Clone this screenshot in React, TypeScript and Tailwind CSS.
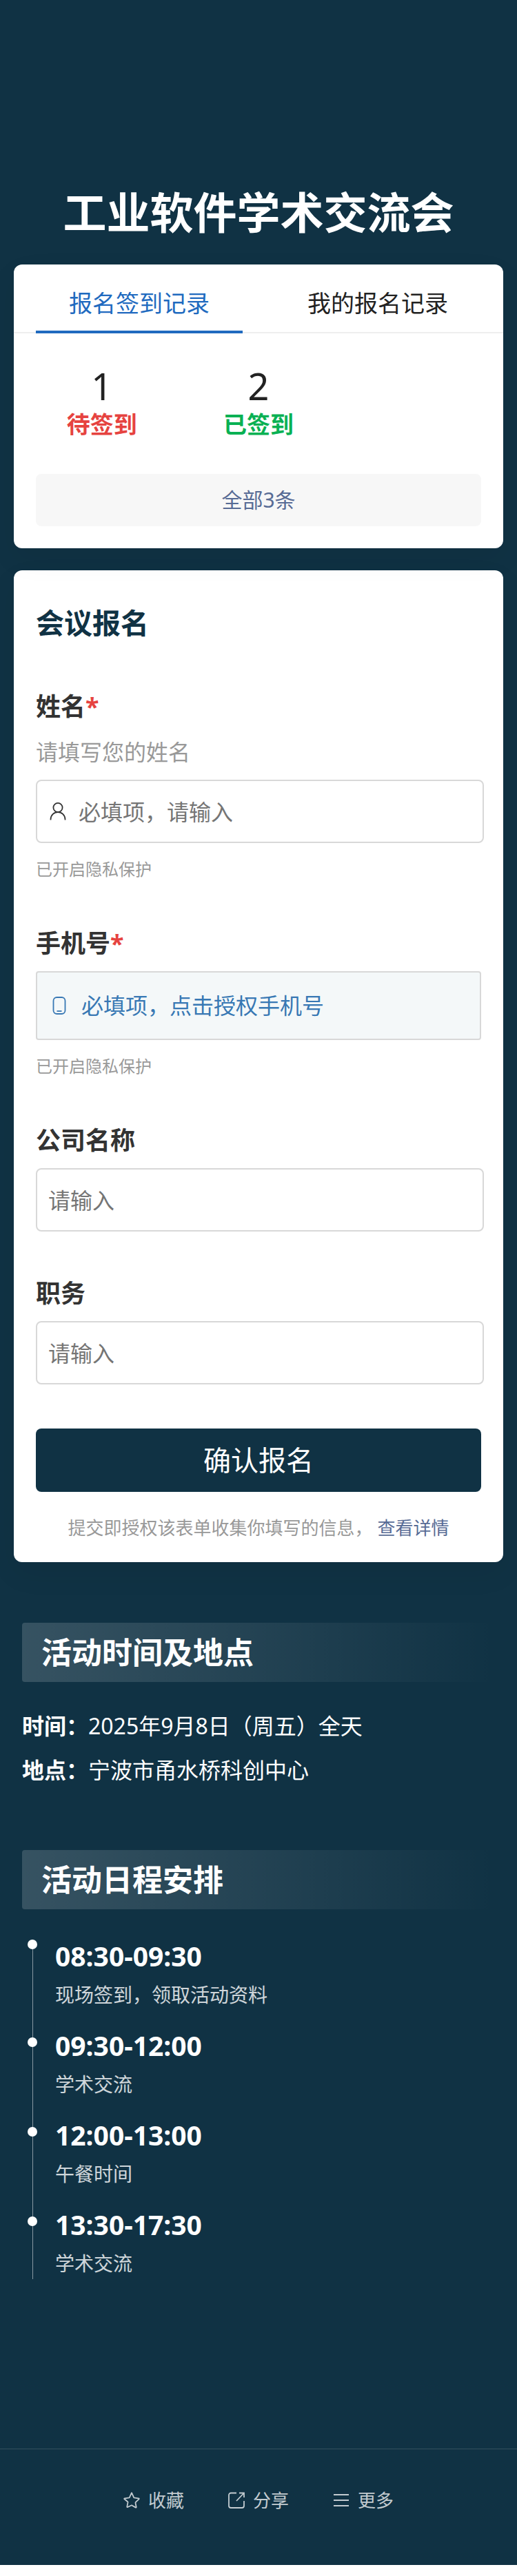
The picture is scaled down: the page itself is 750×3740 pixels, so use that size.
import { useState } from "react";
import type { ReactNode } from "react";

const tabs = ["报名签到记录", "我的报名记录"];

const stats = [
  { count: 1, label: "待签到", color: "text-[#e64340]" },
  { count: 2, label: "已签到", color: "text-[#09b153]" },
];

const schedule = [
  { time: "08:30-09:30", desc: "现场签到，领取活动资料" },
  { time: "09:30-12:00", desc: "学术交流" },
  { time: "12:00-13:00", desc: "午餐时间" },
  { time: "13:30-17:30", desc: "学术交流" },
];

const actions = [
  {
    label: "收藏",
    icon: (
      <svg viewBox="0 0 24 24" fill="none" stroke="currentColor" strokeWidth={1.8} strokeLinejoin="round" className="w-6 h-6" aria-hidden="true">
        <path d="M12 1.2l3.1 6.6q.2.500.800.600l6.300.900q1 .200.300 1l-4.700 4.500q-.400.400-.300 1l1.200 6.200q.100 1-.800.600L12 19.300l-5.900 2.700q-.900.400-.800-.600l1.200-6.200q.100-.600-.300-1L1.500 10.300q-.700-.800.300-1l6.300-.9q.600-.100.800-.600z" />
      </svg>
    ),
  },
  {
    label: "分享",
    icon: (
      <svg viewBox="0 0 24 24" fill="none" stroke="currentColor" strokeWidth={1.8} className="w-6 h-6" aria-hidden="true">
        <path d="M12 1.500H4A3 3 0 001 4.500V20a3 3 0 003 3h16a3 3 0 003-3v-7M16 1.500h7V8M23 1.500L12 13" />
      </svg>
    ),
  },
  {
    label: "更多",
    icon: (
      <svg viewBox="0 0 24 24" fill="none" stroke="currentColor" strokeWidth={2} className="w-6 h-6" aria-hidden="true">
        <path d="M1 4h22M1 12h22M1 20h22" />
      </svg>
    ),
  },
];

function Field({ id, label, required, note, children }: {
  id: string;
  label: string;
  required?: boolean;
  note?: string;
  children: ReactNode;
}) {
  return (
    <div>
      <label htmlFor={id} className="block text-[36px] leading-[48px] font-bold text-[#333]">
        {label}
        {required && <span className="text-[#e64340]">*</span>}
      </label>
      {note && <p className="mt-[18px] text-[32px] leading-[48px] text-[#999]">{note}</p>}
      <div className="mt-4">{children}</div>
    </div>
  );
}

function PrivacyHint() {
  return <p className="mt-5 text-[24px] leading-[36px] text-[#999]">已开启隐私保护</p>;
}

function SectionTitle({ children }: { children: ReactNode }) {
  return (
    <h2 className="rounded bg-linear-to-r from-white/16 to-white/0 px-7 py-3 text-[44px] leading-[62px] font-bold">
      {children}
    </h2>
  );
}

export default function App() {
  const [tab, setTab] = useState(0);

  return (
    <div className="bg-white pb-4 font-['Noto_Sans','Noto_Sans_CJK_SC',sans-serif]">
      <div className="bg-[#103244] text-white">
        <main className="px-5 pt-[264px]">
          <h1 className="text-center text-[63px] leading-[88px] font-bold">工业软件学术交流会</h1>

          {/* Records */}
          <section className="relative z-10 mt-8 rounded-xl bg-white pb-8 text-[#222] shadow-[0_16px_44px_rgba(0,0,0,0.06)]">
            <div className="flex justify-between gap-6 border-b-2 border-[#eee] px-8" role="tablist">
              {tabs.map((t, i) => (
                <button
                  key={t}
                  type="button"
                  role="tab"
                  aria-selected={tab === i}
                  onClick={() => setTab(i)}
                  className={`-mb-0.5 w-[300px] border-b-4 pt-8 pb-4 text-[34px] leading-[48px] ${
                    tab === i ? "border-[#206abf] text-[#206abf]" : "border-transparent"
                  }`}
                >
                  {t}
                </button>
              ))}
            </div>

            <div className="grid grid-cols-3 px-3.5 pt-11 text-center">
              {stats.map((s) => (
                <div key={s.label}>
                  <div className="text-[54px] leading-[64px]">{s.count}</div>
                  <div className={`text-[34px] leading-[48px] font-bold ${s.color}`}>{s.label}</div>
                </div>
              ))}
            </div>

            <div className="px-8 pt-12">
              <button type="button" className="w-full rounded-lg bg-[#f7f7f7] py-4 text-[30px] leading-[44px] text-[#576b95]">
                全部3条
              </button>
            </div>
          </section>

          {/* Sign-up form */}
          <form className="mt-8 rounded-xl bg-white px-8 pt-12 pb-8 text-[#333] shadow-[0_16px_44px_rgba(0,0,0,0.06)]">
            <h2 className="text-[41px] leading-[56px] font-bold text-[#103244]">会议报名</h2>

            <div className="mt-[70px] flex flex-col gap-[66px]">
              <Field id="name" label="姓名" required note="请填写您的姓名">
                <div className="box-content flex w-full items-center rounded-lg border-2 border-[#d8d8d8]">
                  <svg viewBox="0 0 24 26" fill="none" stroke="currentColor" strokeWidth={1.8} className="ml-[18px] h-[26px] w-6" aria-hidden="true">
                    <circle cx="12" cy="7.5" r="6.6" />
                    <path d="M1.5 25.5v-1a10.5 10.4 0 0121 0v1" />
                  </svg>
                  <input id="name" placeholder="必填项，请输入" className="h-[88px] min-w-0 flex-1 px-[18px] text-[32px] outline-none placeholder:text-[#757575]" />
                </div>
                <PrivacyHint />
              </Field>

              <Field id="phone" label="手机号" required>
                <button id="phone" type="button" className="flex h-[100px] w-full items-center gap-[22px] rounded border-2 border-[#d8d8d8] bg-[#f4f8f9] px-[22px] text-[32px] text-[#3878b4]">
                  <svg viewBox="0 0 20 26" fill="none" stroke="currentColor" strokeWidth={1.8} className="h-[26px] w-5" aria-hidden="true">
                    <rect x="1.5" y="1" width="17" height="24" rx="5" />
                    <path d="M6.5 21h7" />
                  </svg>
                  必填项，点击授权手机号
                </button>
                <PrivacyHint />
              </Field>

              <Field id="company" label="公司名称">
                <input id="company" placeholder="请输入" className="box-content block h-[88px] w-[calc(100%-32px)] rounded-lg border-2 border-[#d8d8d8] px-4 text-[32px] outline-none placeholder:text-[#757575]" />
              </Field>

              <Field id="job" label="职务">
                <input id="job" placeholder="请输入" className="box-content block h-[88px] w-[calc(100%-32px)] rounded-lg border-2 border-[#d8d8d8] px-4 text-[32px] outline-none placeholder:text-[#757575]" />
              </Field>
            </div>

            <button type="button" className="mt-16 h-[92px] w-full rounded-lg bg-[#103244] text-[40px] text-white">
              确认报名
            </button>
            <p className="mt-[34px] text-center text-[26px] leading-[36px] text-[#999]">
              提交即授权该表单收集你填写的信息， <a href="#terms" className="text-[#576b95]">查看详情</a>
            </p>
          </form>
        </main>

        <div className="px-8 pt-[88px]">
          <SectionTitle>活动时间及地点</SectionTitle>
          <div className="mt-8 text-[32px] leading-[64px]">
            <p><strong>时间：</strong>2025年9月8日（周五）全天</p>
            <p><strong>地点：</strong>宁波市甬水桥科创中心</p>
          </div>
        </div>

        <div className="px-8 pt-[84px]">
          <SectionTitle>活动日程安排</SectionTitle>
          <ol className="mt-11 ml-[15px] border-l border-white/50">
            {schedule.map((s) => (
              <li key={s.time} className="relative h-[130px] pl-8 first:h-[142px] first:pt-3 last:h-[91px]">
                <span className="absolute top-0 -left-2 size-3.5 rounded-full bg-white" />
                <div className="text-[39px] leading-[24px] font-bold">{s.time}</div>
                <p className="mt-6 text-[28px] leading-[40px] text-white/80">{s.desc}</p>
              </li>
            ))}
          </ol>
        </div>

        <footer className="mt-[246px] flex justify-center gap-16 border-t border-white/15 pt-14 pb-[76px]">
          {actions.map((a) => (
            <button key={a.label} type="button" className="flex items-center gap-3 text-[26px] leading-[36px] text-white/75">
              {a.icon}
              {a.label}
            </button>
          ))}
        </footer>
      </div>
    </div>
  );
}
